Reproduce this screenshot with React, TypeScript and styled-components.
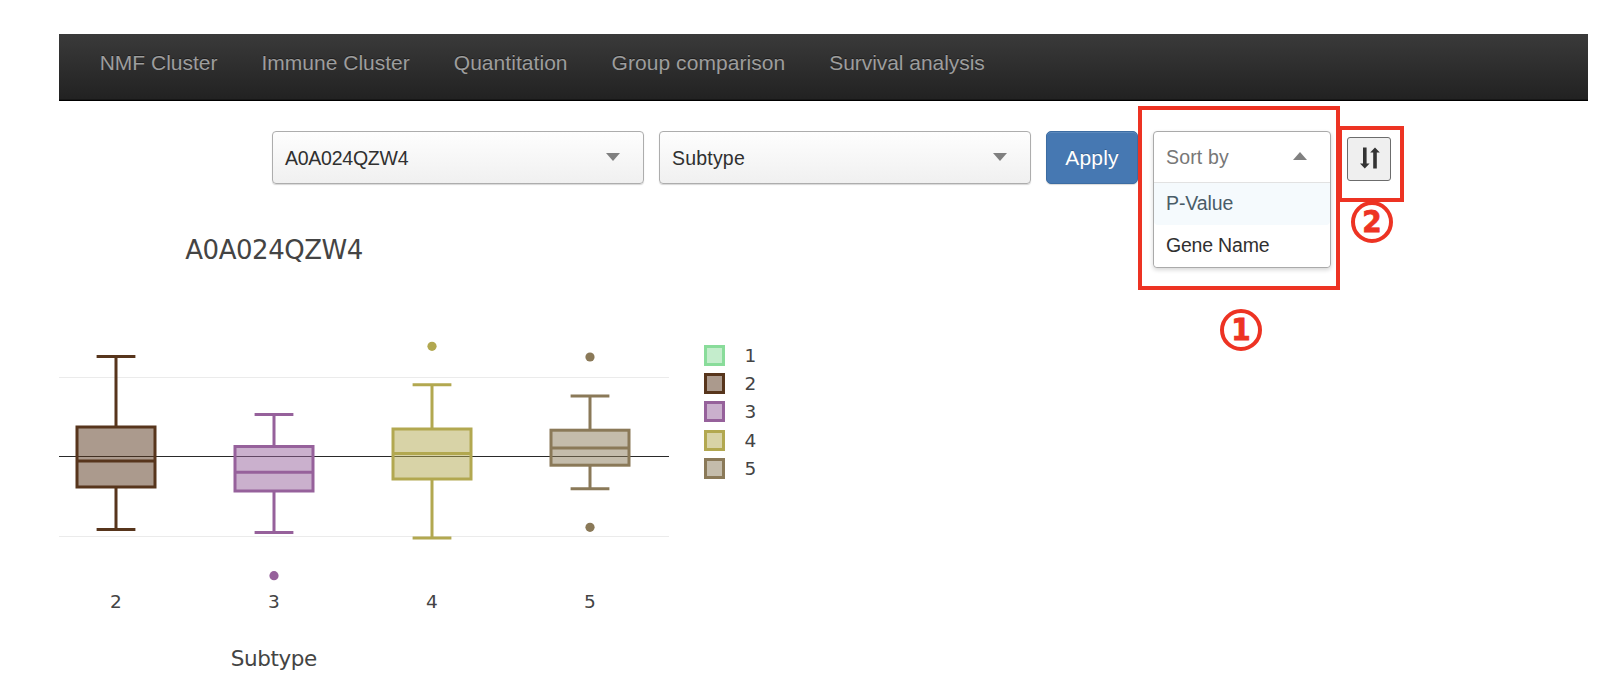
import React from "react";
import styled, { createGlobalStyle } from "styled-components";

const GlobalStyle = createGlobalStyle`
  * { box-sizing: border-box; }
  body {
    margin: 0;
    background: #fff;
    font-family: "Liberation Sans", Arial, sans-serif;
  }
`;

const Page = styled.div`
  position: relative;
  width: 1610px;
  height: 698px;
  padding: 34px 22px 0 59px;
  overflow: hidden;
`;

const NavBar = styled.nav`
  display: flex;
  height: 67px;
  padding: 17px 0 0 18.7px;
  background: linear-gradient(#3a3a3a, #222 98%);
  border-bottom: 1px solid #000;
  box-shadow: inset 0 -1px 0 #171717;
`;

const NavItem = styled.a<{ $tracking?: number }>`
  padding: 0 22px;
  font-size: 21px;
  line-height: 24px;
  letter-spacing: ${(p) => p.$tracking ?? 0}px;
  color: #9d9d9d;
  text-shadow: 0 -1px 0 rgba(0, 0, 0, 0.4);
  white-space: nowrap;
`;

const Toolbar = styled.div`
  display: flex;
  align-items: flex-start;
  padding: 30px 0 0 213px;
  height: 114px;
`;

const Select = styled.div`
  display: flex;
  align-items: center;
  justify-content: space-between;
  width: 372px;
  height: 53px;
  margin-right: 15px;
  padding: 0 23px 0 12px;
  border: 1px solid #adadad;
  border-radius: 4px;
  background: linear-gradient(#fefefe, #f0f0f0);
  box-shadow: 0 1px 1px rgba(0, 0, 0, 0.16);
`;

const Label = styled.span<{ $tracking?: number; $color?: string }>`
  font-size: 19.5px;
  line-height: 22px;
  letter-spacing: ${(p) => p.$tracking ?? 0}px;
  color: ${(p) => p.$color ?? "#303030"};
  white-space: nowrap;
`;

const Caret = styled.span<{ $up?: boolean }>`
  width: 0;
  height: 0;
  margin-bottom: 2px;
  border: 7.5px solid transparent;
  ${(p) =>
    p.$up
      ? "border-top: 0; border-bottom: 8px solid #808080;"
      : "border-bottom: 0; border-top: 8px solid #808080;"}
`;

const ApplyButton = styled.button`
  width: 92px;
  height: 53px;
  padding: 0;
  border: 1px solid #3c6ca2;
  border-radius: 5px;
  background: #4678b2;
  box-shadow: inset 0 1px 0 #5c89bc, 0 1px 1px rgba(0, 0, 0, 0.15);
  font: 21px/24px "Liberation Sans", Arial, sans-serif;
  letter-spacing: 0.2px;
  color: #fff;
  text-shadow: 0 -1px 0 rgba(0, 0, 0, 0.2);
`;

const SortMenu = styled.div`
  width: 178px;
  height: 137px;
  margin-left: 15px;
  border: 1px solid #aaa;
  border-radius: 4px;
  background: #fff;
  box-shadow: 0 2px 4px rgba(0, 0, 0, 0.16);
`;

const SortHead = styled.div`
  display: flex;
  align-items: center;
  justify-content: space-between;
  height: 51px;
  padding: 0 23px 0 12px;
  border-bottom: 1px solid #e2e2e2;
`;

const SortOption = styled.div<{ $active?: boolean }>`
  display: flex;
  align-items: center;
  height: 42px;
  padding: 0 0 2px 12px;
  background: ${(p) => (p.$active ? "#f5fafd" : "#fff")};
  border-radius: 0 0 4px 4px;
`;

const OrderButton = styled.button`
  display: grid;
  place-items: center;
  width: 44px;
  height: 44px;
  margin: 6px 0 0 16px;
  padding: 0 0 3px;
  border: 1px solid #6c6c6c;
  border-radius: 3px;
  background: #efefef;
`;

const Chart = styled.svg`
  display: block;
  font-family: "DejaVu Sans", Verdana, sans-serif;
  fill: #444;
`;

const Frame = styled.div<{ $x: number; $y: number; $w: number; $h: number }>`
  position: absolute;
  left: ${(p) => p.$x}px;
  top: ${(p) => p.$y}px;
  width: ${(p) => p.$w}px;
  height: ${(p) => p.$h}px;
  border: 4px solid #ed3323;
`;

const Marker = styled.div<{ $x: number; $y: number }>`
  position: absolute;
  left: ${(p) => p.$x - 21}px;
  top: ${(p) => p.$y - 21}px;
  display: flex;
  justify-content: center;
  width: 42px;
  height: 42px;
  border: 4px solid #ed3323;
  border-radius: 50%;
  font: bold 31px/33px "DejaVu Sans Condensed", "DejaVu Sans", sans-serif;
  font-stretch: condensed;
  -webkit-text-stroke: 0.8px #ed3323;
  color: #ed3323;
`;

const navItems: [string, number][] = [
  ["NMF Cluster", 0],
  ["Immune Cluster", 0],
  ["Quantitation", 0.05],
  ["Group comparison", 0.05],
  ["Survival analysis", -0.05],
];

interface BoxData {
  name: string;
  cx: number;
  color: string;
  top: number;
  q3: number;
  median: number;
  q1: number;
  bottom: number;
  outliers: number[];
}

const boxes: BoxData[] = [
  { name: "2", cx: 116, color: "#57351c", top: 356.5, q3: 427, median: 461, q1: 487, bottom: 529.5, outliers: [] },
  { name: "3", cx: 274, color: "#96619b", top: 414.5, q3: 446.5, median: 472.2, q1: 491, bottom: 532.5, outliers: [575.7] },
  { name: "4", cx: 432, color: "#b2a850", top: 384.7, q3: 429, median: 453.5, q1: 479, bottom: 538, outliers: [346.3] },
  { name: "5", cx: 590, color: "#8a7958", top: 396, q3: 430.2, median: 448, q1: 465.2, bottom: 488.8, outliers: [357, 527.3] },
];

const legend: [string, string, number][] = [
  ["1", "#89dc9a", 345],
  ["2", "#57351c", 373],
  ["3", "#96619b", 401],
  ["4", "#b2a850", 430],
  ["5", "#8a7958", 458],
];

function BoxMark({ d }: { d: BoxData }) {
  return (
    <g stroke={d.color} strokeWidth={3} fill="none">
      <rect x={d.cx - 39} y={d.q3} width={78} height={d.q1 - d.q3} fill={d.color} fillOpacity={0.5} />
      <path
        d={`M${d.cx - 39} ${d.median}h78M${d.cx} ${d.q3}V${d.top}M${d.cx} ${d.q1}V${d.bottom}M${d.cx - 19.4} ${d.top}h38.8M${d.cx - 19.4} ${d.bottom}h38.8`}
      />
      {d.outliers.map((y) => (
        <circle key={y} cx={d.cx} cy={y} r={4.6} fill={d.color} stroke="none" />
      ))}
    </g>
  );
}

export default function App() {
  return (
    <Page>
      <GlobalStyle />
      <NavBar>
        {navItems.map(([text, tracking]) => (
          <NavItem key={text} $tracking={tracking}>
            {text}
          </NavItem>
        ))}
      </NavBar>
      <Toolbar>
        <Select>
          <Label $tracking={-0.25}>A0A024QZW4</Label>
          <Caret />
        </Select>
        <Select>
          <Label $tracking={0.2}>Subtype</Label>
          <Caret />
        </Select>
        <ApplyButton>Apply</ApplyButton>
        <SortMenu>
          <SortHead>
            <Label $color="#777" $tracking={0.15}>Sort by</Label>
            <Caret $up />
          </SortHead>
          <SortOption $active>
            <Label $color="#495c68" $tracking={-0.1}>P-Value</Label>
          </SortOption>
          <SortOption>
            <Label $tracking={-0.2}>Gene Name</Label>
          </SortOption>
        </SortMenu>
        <OrderButton aria-label="Reverse order">
          <svg width="21" height="22" viewBox="0 0 21 22" fill="#333">
            <path d="M4 0.5h3.6v16h3l-4.8 5-4.8-5h3zM14.2 21.5h3.6V5.5h3L16 0.5l-4.8 5h3z" />
          </svg>
        </OrderButton>
      </Toolbar>
      <Chart width="760" height="480" viewBox="59 215 760 480">
        <text x="185.3" y="259" fontSize="26" textLength="178">
          A0A024QZW4
        </text>
        <path d="M59 377.5H669M59 536.5H669" stroke="#ebebeb" />
        <path d="M59 456.5H669" stroke="#2a2a2a" strokeWidth={1.15} />
        {boxes.map((d) => (
          <BoxMark key={d.name} d={d} />
        ))}
        {boxes.map((d) => (
          <text key={d.name} x={d.cx} y="607.7" fontSize="18.5" textAnchor="middle">
            {d.name}
          </text>
        ))}
        <text x="230.8" y="665.7" fontSize="21.5" textLength="86.5">
          Subtype
        </text>
        {legend.map(([name, color, y]) => (
          <g key={name}>
            <rect x="705.5" y={y + 1.5} width="18" height="18" fill={color} fillOpacity={0.5} stroke={color} strokeWidth={3} />
            <text x="744.5" y={y + 17} fontSize="18.5">
              {name}
            </text>
          </g>
        ))}
      </Chart>
      <Frame $x={1138} $y={106} $w={202} $h={184} />
      <Frame $x={1338} $y={126} $w={66} $h={76} />
      <Marker $x={1241} $y={330}>1</Marker>
      <Marker $x={1372} $y={222}>2</Marker>
    </Page>
  );
}
